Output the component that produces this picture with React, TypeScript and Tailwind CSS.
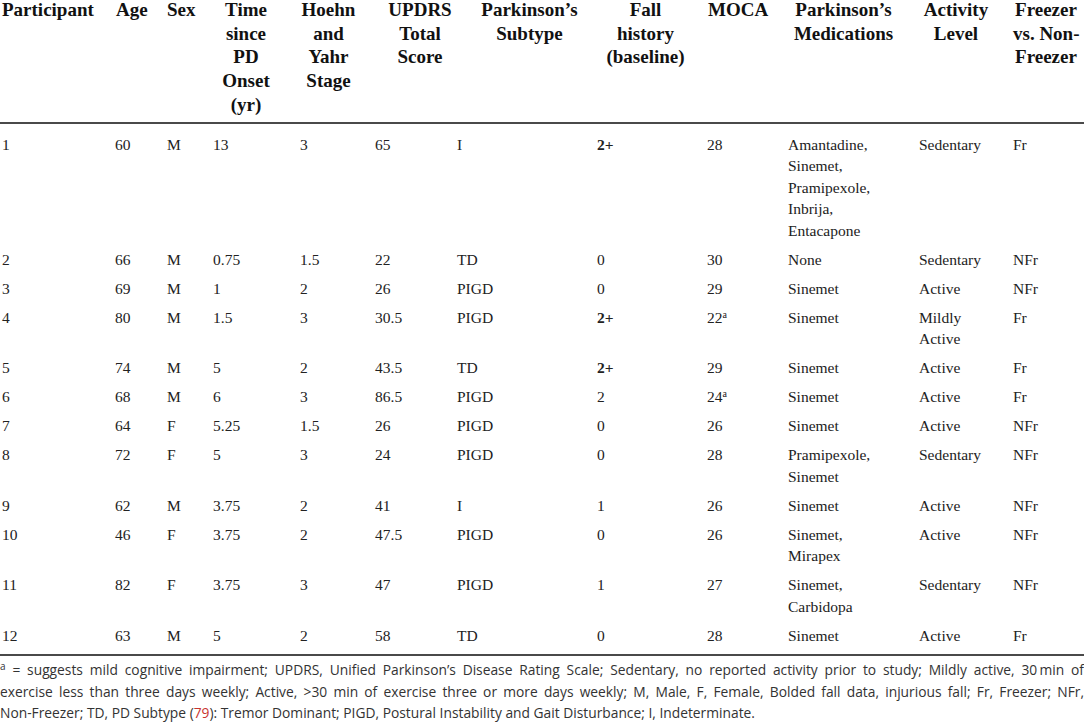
import type { ReactNode } from 'react';

type Row = {
  id: string;
  age: string;
  sex: string;
  onset: string;
  hy: string;
  updrs: string;
  subtype: string;
  fall: string;
  fallBold?: boolean;
  moca: string;
  mocaSup?: boolean;
  meds: string[];
  activity: string[];
  freezer: string;
};

const rows: Row[] = [
  { id: '1', age: '60', sex: 'M', onset: '13', hy: '3', updrs: '65', subtype: 'I', fall: '2+', fallBold: true, moca: '28', meds: ['Amantadine,', 'Sinemet,', 'Pramipexole,', 'Inbrija,', 'Entacapone'], activity: ['Sedentary'], freezer: 'Fr' },
  { id: '2', age: '66', sex: 'M', onset: '0.75', hy: '1.5', updrs: '22', subtype: 'TD', fall: '0', moca: '30', meds: ['None'], activity: ['Sedentary'], freezer: 'NFr' },
  { id: '3', age: '69', sex: 'M', onset: '1', hy: '2', updrs: '26', subtype: 'PIGD', fall: '0', moca: '29', meds: ['Sinemet'], activity: ['Active'], freezer: 'NFr' },
  { id: '4', age: '80', sex: 'M', onset: '1.5', hy: '3', updrs: '30.5', subtype: 'PIGD', fall: '2+', fallBold: true, moca: '22', mocaSup: true, meds: ['Sinemet'], activity: ['Mildly', 'Active'], freezer: 'Fr' },
  { id: '5', age: '74', sex: 'M', onset: '5', hy: '2', updrs: '43.5', subtype: 'TD', fall: '2+', fallBold: true, moca: '29', meds: ['Sinemet'], activity: ['Active'], freezer: 'Fr' },
  { id: '6', age: '68', sex: 'M', onset: '6', hy: '3', updrs: '86.5', subtype: 'PIGD', fall: '2', moca: '24', mocaSup: true, meds: ['Sinemet'], activity: ['Active'], freezer: 'Fr' },
  { id: '7', age: '64', sex: 'F', onset: '5.25', hy: '1.5', updrs: '26', subtype: 'PIGD', fall: '0', moca: '26', meds: ['Sinemet'], activity: ['Active'], freezer: 'NFr' },
  { id: '8', age: '72', sex: 'F', onset: '5', hy: '3', updrs: '24', subtype: 'PIGD', fall: '0', moca: '28', meds: ['Pramipexole,', 'Sinemet'], activity: ['Sedentary'], freezer: 'NFr' },
  { id: '9', age: '62', sex: 'M', onset: '3.75', hy: '2', updrs: '41', subtype: 'I', fall: '1', moca: '26', meds: ['Sinemet'], activity: ['Active'], freezer: 'NFr' },
  { id: '10', age: '46', sex: 'F', onset: '3.75', hy: '2', updrs: '47.5', subtype: 'PIGD', fall: '0', moca: '26', meds: ['Sinemet,', 'Mirapex'], activity: ['Active'], freezer: 'NFr' },
  { id: '11', age: '82', sex: 'F', onset: '3.75', hy: '3', updrs: '47', subtype: 'PIGD', fall: '1', moca: '27', meds: ['Sinemet,', 'Carbidopa'], activity: ['Sedentary'], freezer: 'NFr' },
  { id: '12', age: '63', sex: 'M', onset: '5', hy: '2', updrs: '58', subtype: 'TD', fall: '0', moca: '28', meds: ['Sinemet'], activity: ['Active'], freezer: 'Fr' },
];

function Lines({ items }: { items: string[] }) {
  return (
    <>
      {items.map((t, i) => (
        <div key={i}>{t}</div>
      ))}
    </>
  );
}

function Th({ className, children }: { className: string; children: ReactNode }) {
  return (
    <th className="align-top p-0 pb-[5px] font-bold">
      <div className={'-mt-[2px] whitespace-nowrap ' + className}>{children}</div>
    </th>
  );
}

export default function App() {
  return (
    <div className="w-[1084px] bg-white font-['Liberation_Serif',serif] text-[#111]">
      <table className="w-[1084px] table-fixed border-collapse">
        <colgroup>
          <col className="w-[115px]" />
          <col className="w-[52px]" />
          <col className="w-[46px]" />
          <col className="w-[87px]" />
          <col className="w-[75px]" />
          <col className="w-[82px]" />
          <col className="w-[140px]" />
          <col className="w-[110px]" />
          <col className="w-[81px]" />
          <col className="w-[131px]" />
          <col className="w-[94px]" />
          <col className="w-[71px]" />
        </colgroup>
        <thead>
          <tr className="border-b-2 border-[#4a4a4a] text-[19px] leading-[23.7px]">
            <Th className="pl-[2px] text-left">Participant</Th>
            <Th className="pl-[1px] text-left">Age</Th>
            <Th className="text-left">Sex</Th>
            <Th className="pr-[21px] text-center">Time<br />since<br />PD<br />Onset<br />(yr)</Th>
            <Th className="pr-[18px] text-center">Hoehn<br />and<br />Yahr<br />Stage</Th>
            <Th className="pl-[8px] text-center">UPDRS<br />Total<br />Score</Th>
            <Th className="pl-[5px] text-center">Parkinson’s<br />Subtype</Th>
            <Th className="pr-[13px] text-center">Fall<br />history<br />(baseline)</Th>
            <Th className="pl-[1px] text-left">MOCA</Th>
            <Th className="pr-[20px] text-center">Parkinson’s<br />Medications</Th>
            <Th className="pr-[20px] text-center">Activity<br />Level</Th>
            <Th className="pr-[5px] text-center">Freezer<br />vs. Non-<br />Freezer</Th>
          </tr>
        </thead>
        <tbody className="text-[15.5px] leading-[21.5px] text-[#222]">
          {rows.map((r, i) => {
            const pad = i === 0 ? 'pt-[10px] pb-[3.75px]' : i === rows.length - 1 ? 'pt-[3.75px] pb-[8px]' : 'py-[3.75px]';
            const td = 'align-top p-0 ' + pad;
            return (
              <tr key={r.id} className={i === rows.length - 1 ? 'border-b-2 border-[#4a4a4a]' : ''}>
                <td className={td + ' pl-[2px]'}>{r.id}</td>
                <td className={td}>{r.age}</td>
                <td className={td}>{r.sex}</td>
                <td className={td}>{r.onset}</td>
                <td className={td}>{r.hy}</td>
                <td className={td}>{r.updrs}</td>
                <td className={td}>{r.subtype}</td>
                <td className={td + (r.fallBold ? ' font-bold' : '')}>{r.fall}</td>
                <td className={td}>
                  {r.moca}
                  {r.mocaSup && <sup className="text-[10px]">a</sup>}
                </td>
                <td className={td}><Lines items={r.meds} /></td>
                <td className={td}><Lines items={r.activity} /></td>
                <td className={td}>{r.freezer}</td>
              </tr>
            );
          })}
        </tbody>
      </table>
      <div className="pt-[3px] font-['Open_Sans',sans-serif] text-[13.8px] leading-[21.5px] text-[#333]">
        <p className="text-justify [text-align-last:justify]">
          <sup className="text-[10px]">a</sup> = suggests mild cognitive impairment; UPDRS, Unified Parkinson’s Disease Rating Scale; Sedentary, no reported activity prior to study; Mildly active, 30&#8201;min of
        </p>
        <p className="text-justify [text-align-last:justify]">
          exercise less than three days weekly; Active, &gt;30 min of exercise three or more days weekly; M, Male, F, Female, Bolded fall data, injurious fall; Fr, Freezer; NFr,
        </p>
        <p>
          Non-Freezer; TD, PD Subtype (<span className="text-[#c8332f]">79</span>): Tremor Dominant; PIGD, Postural Instability and Gait Disturbance; I, Indeterminate.
        </p>
      </div>
    </div>
  );
}
